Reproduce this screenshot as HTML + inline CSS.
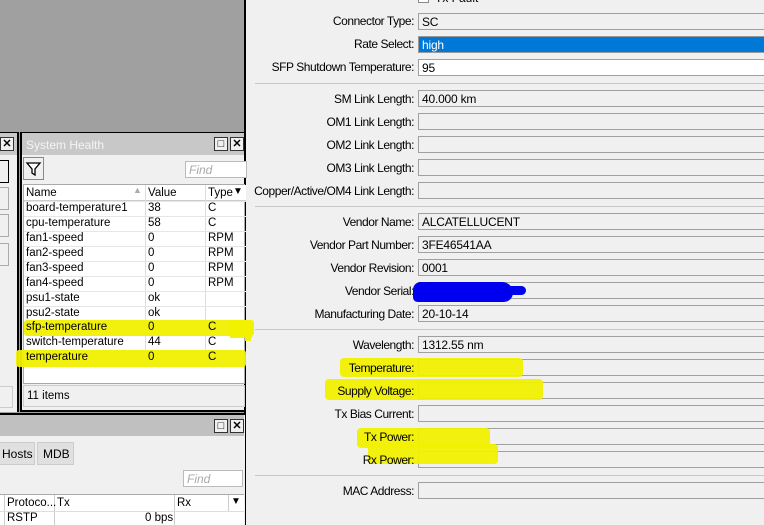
<!DOCTYPE html>
<html><head><style>
*{box-sizing:border-box;margin:0;padding:0}
body{width:764px;height:525px;overflow:hidden;position:relative;background:#a0a0a0;font-family:"Liberation Sans",sans-serif;font-size:11.5px;color:#000}
.a{position:absolute}
.lbl{position:absolute;right:350px;text-align:right;white-space:nowrap;font-size:12px;letter-spacing:-0.45px}
.fld{position:absolute;left:418px;width:360px;height:17px;border:1px solid #a0a0a0;background:#f0f0f0;padding:1px 0 0 3px;font-size:12px;white-space:nowrap;letter-spacing:-0.2px}
.sep{position:absolute;left:255px;width:520px;height:1px;background:#c8c8c8}
.hl{position:absolute;background:#f0f000;opacity:0.95}
.btnx{position:absolute;width:14px;height:14px;border:1px solid #333;background:#f0f0f0;font-size:11px;font-weight:bold;text-align:center;line-height:12px}
.row{position:absolute;left:0;width:223px;height:15px;border-top:1px solid #e6e6e6}
.row span{position:absolute;top:0}
</style></head><body>

<div class="a" style="left:244px;top:0;width:2px;height:525px;background:#000"></div>
<div class="a" style="left:246px;top:0;width:518px;height:525px;background:#f0f0f0"></div>
<div class="a" style="left:418px;top:-8px;width:11px;height:11px;border:1px solid #888;background:#fff"></div>
<div class="a" style="left:435px;top:-9px;font-size:12px">Tx Fault</div>

<div class="lbl" style="top:14px">Connector Type:</div><div class="fld" style="top:13px">SC</div>
<div class="lbl" style="top:37px">Rate Select:</div><div class="fld" style="top:36px;background:#0078d7;color:#fff;border-color:#999">high</div>
<div class="lbl" style="top:60px">SFP Shutdown Temperature:</div><div class="fld" style="top:59px;background:#fff">95</div>
<div class="sep" style="top:83px"></div>
<div class="lbl" style="top:92px">SM Link Length:</div><div class="fld" style="top:90px">40.000 km</div>
<div class="lbl" style="top:115px">OM1 Link Length:</div><div class="fld" style="top:113px"></div>
<div class="lbl" style="top:138px">OM2 Link Length:</div><div class="fld" style="top:136px"></div>
<div class="lbl" style="top:161px">OM3 Link Length:</div><div class="fld" style="top:159px"></div>
<div class="lbl" style="top:184px">Copper/Active/OM4 Link Length:</div><div class="fld" style="top:182px"></div>
<div class="sep" style="top:206px"></div>
<div class="lbl" style="top:215px">Vendor Name:</div><div class="fld" style="top:213px">ALCATELLUCENT</div>
<div class="lbl" style="top:238px">Vendor Part Number:</div><div class="fld" style="top:236px">3FE46541AA</div>
<div class="lbl" style="top:261px">Vendor Revision:</div><div class="fld" style="top:259px">0001</div>
<div class="lbl" style="top:284px">Vendor Serial:</div><div class="fld" style="top:282px"></div>
<div class="a" style="left:413px;top:282px;width:100px;height:20px;background:#0000f0;border-radius:10px 14px 12px 6px"></div>
<div class="a" style="left:500px;top:286px;width:26px;height:9px;background:#0000f0;border-radius:5px"></div>
<div class="lbl" style="top:307px">Manufacturing Date:</div><div class="fld" style="top:305px">20-10-14</div>
<div class="sep" style="top:329px"></div>
<div class="hl" style="left:245px;top:325px;width:6px;height:16px"></div>
<div class="lbl" style="top:338px">Wavelength:</div><div class="fld" style="top:336px">1312.55 nm</div>
<div class="fld" style="top:359px"></div>
<div class="fld" style="top:382px"></div>
<div class="lbl" style="top:407px">Tx Bias Current:</div><div class="fld" style="top:405px"></div>
<div class="fld" style="top:428px"></div>
<div class="fld" style="top:451px"></div>
<div class="hl" style="left:340px;top:358px;width:183px;height:19px;border-radius:4px"></div>
<div class="hl" style="left:325px;top:379px;width:218px;height:21px;border-radius:4px"></div>
<div class="hl" style="left:357px;top:428px;width:133px;height:20px;border-radius:4px"></div>
<div class="hl" style="left:368px;top:444px;width:130px;height:20px;border-radius:4px"></div>
<div class="lbl" style="top:361px">Temperature:</div>
<div class="lbl" style="top:384px">Supply Voltage:</div>
<div class="lbl" style="top:430px">Tx Power:</div>
<div class="lbl" style="top:453px">Rx Power:</div>
<div class="sep" style="top:475px"></div>
<div class="lbl" style="top:484px">MAC Address:</div><div class="fld" style="top:482px"></div>

<div class="a" style="left:0;top:132px;width:19px;height:280px;background:#f0f0f0;border-right:2px solid #000;border-top:1px solid #000"></div>
<div class="a" style="left:0;top:133px;width:17px;height:22px;background:#c8c8c8"></div>
<div class="btnx" style="left:0;top:137px">✕</div>
<div class="a" style="left:0;top:160px;width:9px;height:23px;border:1px solid #000;border-left:none;background:#f0f0f0"></div>
<div class="a" style="left:0;top:187px;width:9px;height:23px;border:1px solid #aaa;border-left:none"></div>
<div class="a" style="left:0;top:214px;width:9px;height:23px;border:1px solid #aaa;border-left:none"></div>
<div class="a" style="left:0;top:243px;width:9px;height:23px;border:1px solid #aaa;border-left:none"></div>
<div class="a" style="left:0;top:386px;width:13px;height:22px;border:1px solid #ccc;border-left:none"></div>

<div class="a" style="left:20px;top:132px;width:225px;height:280px;background:#f0f0f0;border:1px solid #000;border-width:1px 1px 2px 2px"></div>
<div class="a" style="left:22px;top:133px;width:222px;height:22px;background:#c8c8c8"></div>
<div class="a" style="left:26px;top:138px;color:#f4f4f4;font-size:12px">System Health</div>
<div class="btnx" style="left:214px;top:137px;font-weight:normal">□</div>
<div class="btnx" style="left:230px;top:137px">✕</div>
<div class="a" style="left:23px;top:157px;width:21px;height:23px;border:1px solid #888;background:#f0f0f0">
<svg width="19" height="21" viewBox="0 0 19 21"><path d="M3 5 H16 L11 11 V17 L8 15 V11 Z" fill="#fff" stroke="#000" stroke-width="1.3"/></svg></div>
<div class="a" style="left:185px;top:161px;width:62px;height:17px;border:1px solid #bbb;background:#fff;color:#aaa;font-style:italic;padding:1px 3px;font-size:12px">Find</div>
<div class="a" style="left:23px;top:184px;width:222px;height:200px;background:#fff;border:1px solid #aaa">
<div class="a" style="left:0;top:0;width:222px;height:16px;background:#fff;border-bottom:1px solid #ccc"></div>
<div class="a" style="left:2px;top:2px">Name</div><div class="a" style="left:109px;top:0px;color:#aaa;font-size:9px">▲</div>
<div class="a" style="left:121px;top:0;width:1px;height:170px;background:#ddd"></div>
<div class="a" style="left:181px;top:0;width:1px;height:170px;background:#ddd"></div>
<div class="a" style="left:124px;top:2px">Value</div><div class="a" style="left:184px;top:2px">Type</div><div class="a" style="left:209px;top:1px;font-size:10px">▼</div>
<div class="hl" style="left:0;top:135px;width:230px;height:16px;border-radius:3px"></div>
<div class="hl" style="left:-8px;top:165px;width:230px;height:17px;border-radius:3px"></div>
<div class="row" style="top:16px"><span style="left:2px">board-temperature1</span><span style="left:124px">38</span><span style="left:184px">C</span></div>
<div class="row" style="top:31px"><span style="left:2px">cpu-temperature</span><span style="left:124px">58</span><span style="left:184px">C</span></div>
<div class="row" style="top:46px"><span style="left:2px">fan1-speed</span><span style="left:124px">0</span><span style="left:184px">RPM</span></div>
<div class="row" style="top:61px"><span style="left:2px">fan2-speed</span><span style="left:124px">0</span><span style="left:184px">RPM</span></div>
<div class="row" style="top:76px"><span style="left:2px">fan3-speed</span><span style="left:124px">0</span><span style="left:184px">RPM</span></div>
<div class="row" style="top:91px"><span style="left:2px">fan4-speed</span><span style="left:124px">0</span><span style="left:184px">RPM</span></div>
<div class="row" style="top:106px"><span style="left:2px">psu1-state</span><span style="left:124px">ok</span></div>
<div class="row" style="top:121px"><span style="left:2px">psu2-state</span><span style="left:124px">ok</span></div>
<div class="row" style="top:136px;border:none"><span style="left:2px">sfp-temperature</span><span style="left:124px">0</span><span style="left:184px">C</span></div>
<div class="row" style="top:151px;border:none"><span style="left:2px">switch-temperature</span><span style="left:124px">44</span><span style="left:184px">C</span></div>
<div class="row" style="top:166px;border:none"><span style="left:2px">temperature</span><span style="left:124px">0</span><span style="left:184px">C</span></div>
</div>
<div class="hl" style="left:230px;top:320px;width:22px;height:18px"></div>
<div class="a" style="left:23px;top:385px;width:222px;height:22px;border:1px solid #ccc;padding:4px 3px">11 items</div>

<div class="a" style="left:0;top:413px;width:245px;height:112px;background:#f0f0f0;border-top:2px solid #000"></div>
<div class="a" style="left:0;top:415px;width:244px;height:21px;background:#c0c0c0"></div>
<div class="btnx" style="left:214px;top:419px;font-weight:normal">□</div>
<div class="btnx" style="left:230px;top:419px">✕</div>
<div class="a" style="left:0;top:442px;width:35px;height:23px;background:#e0e0e0;border:1px solid #ccc;border-left:none;padding:4px 2px;font-size:12px">Hosts</div>
<div class="a" style="left:37px;top:442px;width:37px;height:23px;background:#e0e0e0;border:1px solid #ccc;padding:4px 5px;font-size:12px">MDB</div>
<div class="a" style="left:183px;top:470px;width:60px;height:17px;border:1px solid #bbb;background:#fff;color:#aaa;font-style:italic;padding:1px 3px;font-size:12px">Find</div>
<div class="a" style="left:0;top:494px;width:244px;height:31px;background:#fff;border-top:1px solid #aaa"></div>
<div class="a" style="left:4px;top:495px;width:1px;height:30px;background:#ccc"></div>
<div class="a" style="left:54px;top:495px;width:1px;height:30px;background:#ccc"></div>
<div class="a" style="left:174px;top:495px;width:1px;height:30px;background:#ccc"></div>
<div class="a" style="left:228px;top:495px;width:1px;height:17px;background:#ccc"></div>
<div class="a" style="left:0;top:511px;width:244px;height:1px;background:#ddd"></div>
<div class="a" style="left:7px;top:497px">Protoco...</div>
<div class="a" style="left:57px;top:497px">Tx</div>
<div class="a" style="left:177px;top:497px">Rx</div>
<div class="a" style="left:231px;top:496px;font-size:10px">▼</div>
<div class="a" style="left:7px;top:512px">RSTP</div>
<div class="a" style="left:145px;top:512px">0 bps</div>
</body></html>
